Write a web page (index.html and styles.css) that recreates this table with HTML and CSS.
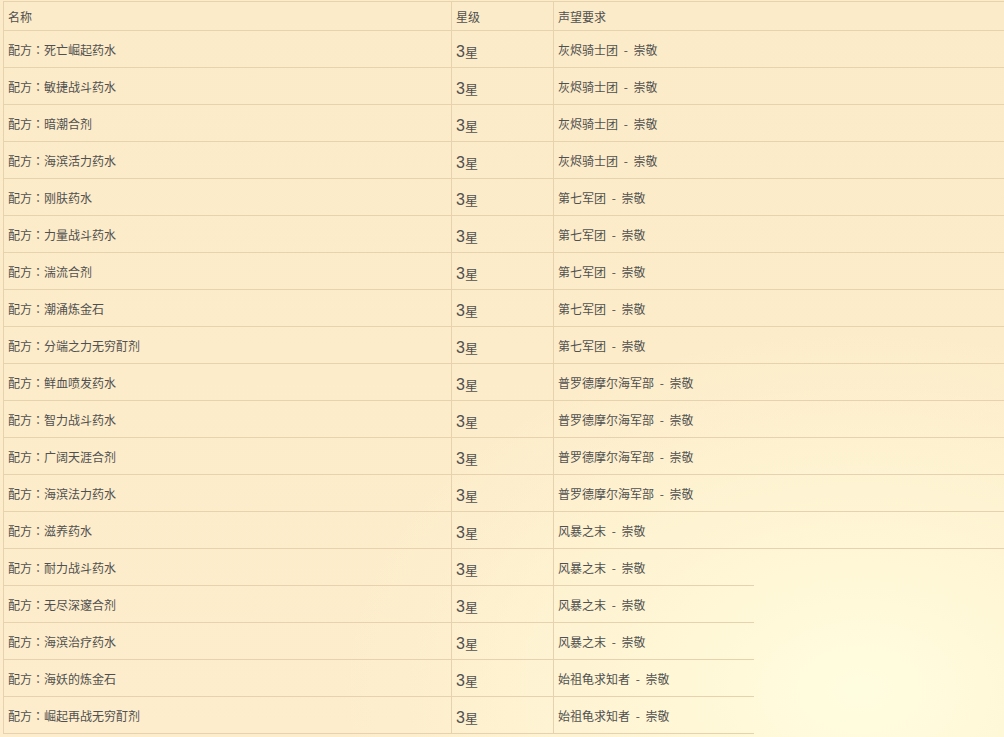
FILE: index.html
```html
<!DOCTYPE html>
<html lang="zh-CN">
<head>
<meta charset="utf-8">
<title>配方列表</title>
<link rel="stylesheet" href="styles.css">
</head>
<body>
<div class="page">
  <div class="table table-wide">
    <div class="row head">
      <div class="cell name">名称</div>
      <div class="cell star">星级</div>
      <div class="cell rep">声望要求</div>
    </div>
    <div class="row"><div class="cell name">配方<span class="colon">：</span>死亡崛起药水</div><div class="cell star"><span class="num">3</span>星</div><div class="cell rep">灰烬骑士团 - 崇敬</div></div>
    <div class="row"><div class="cell name">配方<span class="colon">：</span>敏捷战斗药水</div><div class="cell star"><span class="num">3</span>星</div><div class="cell rep">灰烬骑士团 - 崇敬</div></div>
    <div class="row"><div class="cell name">配方<span class="colon">：</span>暗潮合剂</div><div class="cell star"><span class="num">3</span>星</div><div class="cell rep">灰烬骑士团 - 崇敬</div></div>
    <div class="row"><div class="cell name">配方<span class="colon">：</span>海滨活力药水</div><div class="cell star"><span class="num">3</span>星</div><div class="cell rep">灰烬骑士团 - 崇敬</div></div>
    <div class="row"><div class="cell name">配方<span class="colon">：</span>刚肤药水</div><div class="cell star"><span class="num">3</span>星</div><div class="cell rep">第七军团 - 崇敬</div></div>
    <div class="row"><div class="cell name">配方<span class="colon">：</span>力量战斗药水</div><div class="cell star"><span class="num">3</span>星</div><div class="cell rep">第七军团 - 崇敬</div></div>
    <div class="row"><div class="cell name">配方<span class="colon">：</span>湍流合剂</div><div class="cell star"><span class="num">3</span>星</div><div class="cell rep">第七军团 - 崇敬</div></div>
    <div class="row"><div class="cell name">配方<span class="colon">：</span>潮涌炼金石</div><div class="cell star"><span class="num">3</span>星</div><div class="cell rep">第七军团 - 崇敬</div></div>
    <div class="row"><div class="cell name">配方<span class="colon">：</span>分端之力无穷酊剂</div><div class="cell star"><span class="num">3</span>星</div><div class="cell rep">第七军团 - 崇敬</div></div>
    <div class="row"><div class="cell name">配方<span class="colon">：</span>鲜血喷发药水</div><div class="cell star"><span class="num">3</span>星</div><div class="cell rep">普罗德摩尔海军部 - 崇敬</div></div>
    <div class="row"><div class="cell name">配方<span class="colon">：</span>智力战斗药水</div><div class="cell star"><span class="num">3</span>星</div><div class="cell rep">普罗德摩尔海军部 - 崇敬</div></div>
    <div class="row"><div class="cell name">配方<span class="colon">：</span>广阔天涯合剂</div><div class="cell star"><span class="num">3</span>星</div><div class="cell rep">普罗德摩尔海军部 - 崇敬</div></div>
    <div class="row"><div class="cell name">配方<span class="colon">：</span>海滨法力药水</div><div class="cell star"><span class="num">3</span>星</div><div class="cell rep">普罗德摩尔海军部 - 崇敬</div></div>
    <div class="row"><div class="cell name">配方<span class="colon">：</span>滋养药水</div><div class="cell star"><span class="num">3</span>星</div><div class="cell rep">风暴之末 - 崇敬</div></div>
  </div>
  <div class="table table-narrow">
    <div class="row"><div class="cell name">配方<span class="colon">：</span>耐力战斗药水</div><div class="cell star"><span class="num">3</span>星</div><div class="cell rep">风暴之末 - 崇敬</div></div>
    <div class="row"><div class="cell name">配方<span class="colon">：</span>无尽深邃合剂</div><div class="cell star"><span class="num">3</span>星</div><div class="cell rep">风暴之末 - 崇敬</div></div>
    <div class="row"><div class="cell name">配方<span class="colon">：</span>海滨治疗药水</div><div class="cell star"><span class="num">3</span>星</div><div class="cell rep">风暴之末 - 崇敬</div></div>
    <div class="row"><div class="cell name">配方<span class="colon">：</span>海妖的炼金石</div><div class="cell star"><span class="num">3</span>星</div><div class="cell rep">始祖龟求知者 - 崇敬</div></div>
    <div class="row"><div class="cell name">配方<span class="colon">：</span>崛起再战无穷酊剂</div><div class="cell star"><span class="num">3</span>星</div><div class="cell rep">始祖龟求知者 - 崇敬</div></div>
  </div>
</div>
</body>
</html>
```

FILE: styles.css
```css
html, body {
  margin: 0;
  padding: 0;
  width: 1004px;
  height: 737px;
  overflow: hidden;
}

body {
  background-color: #fcebc8;
  background-image:
    radial-gradient(ellipse 520px 360px at 860px 690px, #fffde0 0%, #fff7d6 35%, rgba(252, 235, 200, 0) 100%),
    linear-gradient(180deg, #fcebc8 0%, #fdedcc 100%);
  font-family: "Noto Sans CJK SC", "Microsoft YaHei", sans-serif;
  color: #505050;
}

.page {
  padding-top: 1px;
  padding-left: 3px;
}

.table {
  border-left: 1px solid #e6d3ad;
  box-sizing: border-box;
}

.table-wide {
  width: 1001px;
  border-top: 1px solid #e6d3ad;
}

.table-narrow {
  width: 751px;
}

.row {
  display: grid;
  grid-template-columns: 448px 102px 1fr;
  height: 37px;
  box-sizing: border-box;
  border-bottom: 1px solid #e6d3ad;
}

.row.head {
  height: 29px;
}

.cell {
  display: flex;
  align-items: center;
  padding-left: 4px;
  padding-top: 1px;
  box-sizing: border-box;
  font-size: 12px;
  line-height: 14px;
  white-space: nowrap;
}

.head .cell {
  padding-top: 1px;
}

.colon {
  font-family: "Noto Sans CJK TC", "Noto Sans CJK SC", sans-serif;
}

.name,
.star {
  border-right: 1px solid #e6d3ad;
}

.rep {
  word-spacing: 3px;
}

.star {
  font-size: 13px;
  padding-top: 5px;
}

.head .star {
  font-size: 12px;
  padding-top: 1px;
}

.num {
  font-family: "Liberation Sans", "Noto Sans", sans-serif;
  font-size: 16px;
  font-weight: 300;
}
```
